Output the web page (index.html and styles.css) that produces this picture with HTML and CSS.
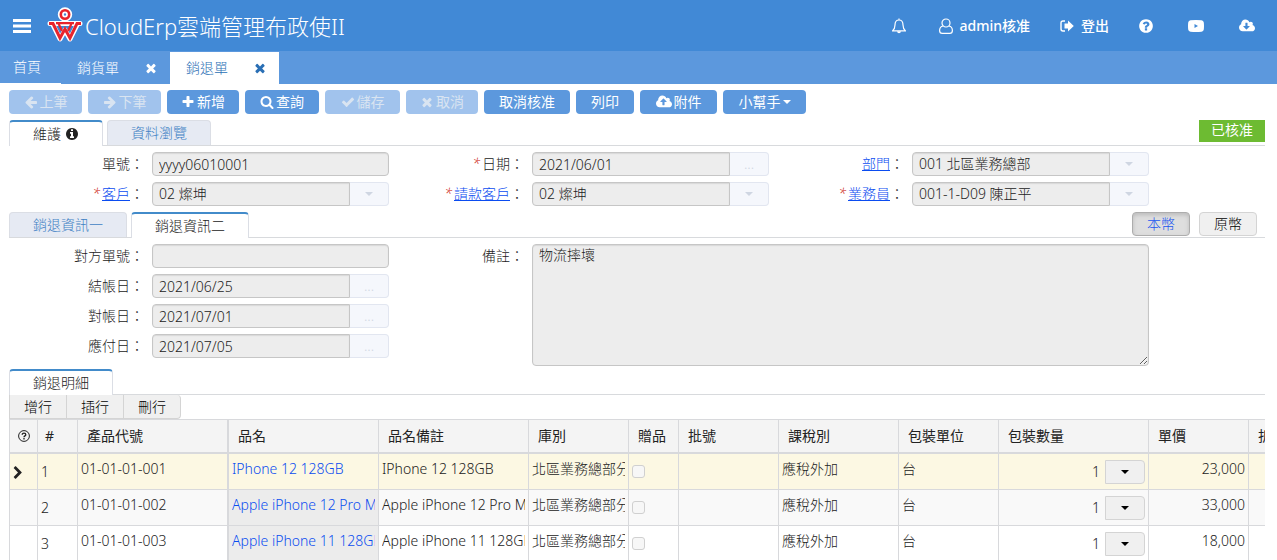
FILE: index.html
```html
<!DOCTYPE html>
<html lang="zh-Hant">
<head>
<meta charset="utf-8">
<meta name="viewport" content="width=device-width, initial-scale=1">
<title>CloudErp雲端管理布政使II</title>
<link rel="stylesheet" href="styles.css">
</head>
<body>
<svg class="sprite" aria-hidden="true">
  <symbol id="i-times" viewBox="0 0 1792 1792"><path d="M1490 1322q0 40-28 68l-136 136q-28 28-68 28t-68-28l-294-294-294 294q-28 28-68 28t-68-28l-136-136q-28-28-28-68t28-68l294-294-294-294q-28-28-28-68t28-68l136-136q28-28 68-28t68 28l294 294 294-294q28-28 68-28t68 28l136 136q28 28 28 68t-28 68l-294 294 294 294q28 28 28 68z"/></symbol>
  <symbol id="i-plus" viewBox="0 0 1792 1792"><path d="M1600 736v192q0 40-28 68t-68 28h-416v416q0 40-28 68t-68 28h-192q-40 0-68-28t-28-68v-416h-416q-40 0-68-28t-28-68v-192q0-40 28-68t68-28h416v-416q0-40 28-68t68-28h192q40 0 68 28t28 68v416h416q40 0 68 28t28 68z"/></symbol>
  <symbol id="i-search" viewBox="0 0 1792 1792"><path d="M1216 832q0-185-131.5-316.5t-316.5-131.5-316.5 131.5-131.5 316.5 131.5 316.5 316.5 131.5 316.5-131.5 131.5-316.5zm512 832q0 52-38 90t-90 38q-54 0-90-38l-343-342q-179 124-399 124-143 0-273.5-55.5t-225-150-150-225-55.5-273.5 55.5-273.5 150-225 225-150 273.5-55.5 273.5 55.5 225 150 150 225 55.5 273.5q0 220-124 399l343 343q37 37 37 90z"/></symbol>
  <symbol id="i-check" viewBox="0 0 1792 1792"><path d="M1671 566q0 40-28 68l-724 724-136 136q-28 28-68 28t-68-28l-136-136-362-362q-28-28-28-68t28-68l136-136q28-28 68-28t68 28l294 295 656-657q28-28 68-28t68 28l136 136q28 28 28 68z"/></symbol>
  <symbol id="i-left" viewBox="0 0 1792 1792"><path d="M1664 896v128q0 53-32.5 90.5t-84.5 37.5h-704l293 294q38 36 38 90t-38 90l-75 76q-37 37-90 37-52 0-91-37l-651-652q-37-37-37-90 0-52 37-91l651-650q38-38 91-38 52 0 90 38l75 74q38 38 38 91t-38 91l-293 293h704q52 0 84.5 37.5t32.5 90.5z"/></symbol>
  <symbol id="i-right" viewBox="0 0 1792 1792"><path transform="matrix(-1 0 0 1 1792 0)" d="M1664 896v128q0 53-32.5 90.5t-84.5 37.5h-704l293 294q38 36 38 90t-38 90l-75 76q-37 37-90 37-52 0-91-37l-651-652q-37-37-37-90 0-52 37-91l651-650q38-38 91-38 52 0 90 38l75 74q38 38 38 91t-38 91l-293 293h704q52 0 84.5 37.5t32.5 90.5z"/></symbol>
  <symbol id="i-info" viewBox="0 0 1792 1792"><path d="M1152 1376v-160q0-14-9-23t-23-9h-96v-512q0-14-9-23t-23-9h-320q-14 0-23 9t-9 23v160q0 14 9 23t23 9h96v320h-96q-14 0-23 9t-9 23v160q0 14 9 23t23 9h448q14 0 23-9t9-23zm-128-896v-160q0-14-9-23t-23-9h-192q-14 0-23 9t-9 23v160q0 14 9 23t23 9h192q14 0 23-9t9-23zm640 416q0 209-103 385.5t-279.5 279.5-385.5 103-385.5-103-279.5-279.5-103-385.5 103-385.5 279.5-279.5 385.5-103 385.5 103 279.5 279.5 103 385.5z"/></symbol>
  <symbol id="i-help" viewBox="0 0 1792 1792"><path d="M1024 1376v-192q0-14-9-23t-23-9h-192q-14 0-23 9t-9 23v192q0 14 9 23t23 9h192q14 0 23-9t9-23zm256-672q0-88-55.5-163t-138.5-116-170-41q-243 0-371 213-15 24 8 42l132 100q7 6 19 6 16 0 25-12 53-68 86-92 34-24 86-24 48 0 85.5 26t37.5 59q0 38-20 61t-68 45q-63 28-115.5 86.5t-52.5 125.5v36q0 14 9 23t23 9h192q14 0 23-9t9-23q0-19 21.5-49.5t54.5-49.5q32-18 49-28.5t46-35 44.5-48 28-60.5 12.5-81zm384 192q0 209-103 385.5t-279.5 279.5-385.5 103-385.5-103-279.5-279.5-103-385.5 103-385.5 279.5-279.5 385.5-103 385.5 103 279.5 279.5 103 385.5z"/></symbol>
  <symbol id="i-chevron" viewBox="0 0 1792 1792"><path d="M1363 877l-742 742q-19 19-45 19t-45-19l-166-166q-19-19-19-45t19-45l531-531-531-531q-19-19-19-45t19-45l166-166q19-19 45-19t45 19l742 742q19 19 19 45t-19 45z"/></symbol>
  <symbol id="i-upload" viewBox="0 0 1920 1792"><path d="M1280 864q0-14-9-23l-352-352q-9-9-23-9t-23 9l-351 351q-10 12-10 24 0 14 9 23t23 9h224v352q0 13 9.5 22.5t22.5 9.5h192q13 0 22.5-9.5t9.5-22.5v-352h224q13 0 22.5-9.5t9.5-22.5zm640 288q0 159-112.5 271.5t-271.5 112.5h-1088q-185 0-316.5-131.5t-131.5-316.5q0-130 70-240t188-165q-2-30-2-43 0-212 150-362t362-150q156 0 285.5 87t188.5 231q71-62 166-62 106 0 181 75t75 181q0 76-41 138 130 31 213.5 135.5t83.5 238.5z"/></symbol>
  <symbol id="i-download" viewBox="0 0 1920 1792"><path d="M1280 928q0-14-9-23t-23-9h-224v-352q0-13-9.500-22.500t-22.500-9.500h-192q-13 0-22.500 9.500t-9.500 22.500v352h-224q-13 0-22.500 9.500t-9.500 22.500q0 14 9 23l352 352q9 9 23 9t23-9l351-351q10-12 10-24zm640 224q0 159-112.500 271.500t-271.500 112.500h-1088q-185 0-316.500-131.500t-131.500-316.500q0-130 70-240t188-165q-2-30-2-43 0-212 150-362t362-150q156 0 285.500 87t188.500 231q71-62 166-62 106 0 181 75t75 181q0 76-41 138 130 31 213.500 135.500t83.500 238.500z"/></symbol>
  <symbol id="i-caret" viewBox="0 0 8 4"><path d="M0 0h8L4 4z"/></symbol>
</svg>

<header class="topbar">
  <button class="menu-btn" type="button" aria-label="選單">
    <svg width="18" height="14" viewBox="0 0 18 14"><path fill="currentColor" d="M0 0h18v3H0zM0 5.500h18v3H0zM0 11h18v3H0z"/></svg>
  </button>
  <svg class="logo" width="42" height="44" viewBox="0 0 42 44" aria-hidden="true">
    <g fill="none" stroke="#fff" stroke-linejoin="round" stroke-linecap="round">
      <circle cx="22" cy="12.500" r="4.200" stroke-width="6"/>
      <path stroke-width="5" d="M7 21.500h30M9.500 22l7.500 15 5-9 5 9 7.500-15"/>
    </g>
    <g fill="none" stroke="#e8242c">
      <circle cx="22" cy="12.500" r="4.200" stroke-width="2.600"/>
      <path stroke-width="3" d="M6 21.500h4l7 14.500 5-9 5 9 7-14.500h4"/>
      <path stroke-width="2.200" d="M13 21.100h18M15.500 21.500l3.500 7.500M28.500 21.500l-3.500 7.500"/>
    </g>
  </svg>
  <h1 class="brand">CloudErp雲端管理布政使II</h1>
  <nav class="topnav">
    <a class="bell" href="#" aria-label="通知"><svg width="14" height="16" viewBox="0 0 14 16"><path fill="none" stroke="currentColor" stroke-width="1.200" d="M7 .5v1.500M3 7c0-3 1.500-5 4-5s4 2 4 5c0 3 .8 4.500 2.500 5.900H.5C2.200 11.500 3 10 3 7z"/><path fill="currentColor" d="M5 13.300h4q-.3 2-2 2t-2-2z"/></svg></a>
    <a class="user" href="#"><svg width="14" height="16" viewBox="0 0 14 16"><g fill="none" stroke="currentColor" stroke-width="1.200"><circle cx="7" cy="5" r="4"/><path d="M4 8C1.500 8.500.6 10.500.6 12.500c0 1.800 1 2.900 2.600 2.900h7.600c1.600 0 2.600-1.100 2.600-2.900 0-2-.9-4-3.400-4.500"/></g></svg>admin核准</a>
    <a class="logout" href="#"><svg width="14" height="12" viewBox="0 0 14 12"><path fill="none" stroke="currentColor" stroke-width="1.400" d="M5 1H3Q1 1 1 3v6q0 2 2 2h2"/><path fill="currentColor" d="M4.500 3.500H8V.6L13.800 6 8 11.400V8.500H4.500z"/></svg>登出</a>
    <a class="help" href="#" aria-label="說明"><svg class="ico16"><use href="#i-help"/></svg></a>
    <a class="video" href="#" aria-label="影片"><svg width="16" height="12" viewBox="0 0 16 12"><path fill="currentColor" fill-rule="evenodd" d="M2.500.3Q8-.3 13.500.3 15.500.5 15.800 2.500q.4 3.500 0 7-.3 2-2.300 2.200-5.500.6-11 0-2-.2-2.300-2.200-.4-3.500 0-7Q.5.500 2.500.3zM6.500 4v4L10 6z"/></svg></a>
    <a class="cloud" href="#" aria-label="下載"><svg class="ico16"><use href="#i-download"/></svg></a>
  </nav>
</header>

<nav class="pages">
  <a class="page home" href="#">首頁</a>
  <div class="page"><a href="#">銷貨單</a><button type="button" aria-label="關閉銷貨單"><svg class="ico14"><use href="#i-times"/></svg></button></div>
  <div class="page current"><a href="#">銷退單</a><button type="button" aria-label="關閉銷退單"><svg class="ico14"><use href="#i-times"/></svg></button></div>
</nav>

<main>
  <div class="toolbar">
    <button class="btn w73" type="button" disabled><svg class="ico14"><use href="#i-left"/></svg>上筆</button>
    <button class="btn w73" type="button" disabled><svg class="ico14"><use href="#i-right"/></svg>下筆</button>
    <button class="btn w72" type="button"><svg class="ico14"><use href="#i-plus"/></svg>新增</button>
    <button class="btn w74" type="button"><svg class="ico14"><use href="#i-search"/></svg>查詢</button>
    <button class="btn w75" type="button" disabled><svg class="ico14"><use href="#i-check"/></svg>儲存</button>
    <button class="btn w72" type="button" disabled><svg class="ico14"><use href="#i-times"/></svg>取消</button>
    <button class="btn" type="button">取消核准</button>
    <button class="btn" type="button">列印</button>
    <button class="btn w77" type="button"><svg class="ico16"><use href="#i-upload"/></svg>附件</button>
    <button class="btn w83" type="button">小幫手<svg class="caret"><use href="#i-caret"/></svg></button>
  </div>

  <div class="tabs">
    <a class="tab active" href="#">維護 <svg class="ico14"><use href="#i-info"/></svg></a>
    <a class="tab" href="#">資料瀏覽</a>
    <span class="status">已核准</span>
  </div>

  <form class="fields">
    <div class="field"><label for="no">單號：</label><input id="no" value="yyyy06010001" readonly></div>
    <div class="field"><label for="date"><i>*</i>日期：</label><div class="group"><input id="date" value="2021/06/01" readonly><button type="button" disabled>...</button></div></div>
    <div class="field"><label for="dept"><a href="#">部門</a>：</label><div class="group"><select id="dept" disabled><option>001 北區業務總部</option></select><span class="addon"><svg class="caret"><use href="#i-caret"/></svg></span></div></div>
    <div class="field"><label for="cust"><i>*</i><a href="#">客戶</a>：</label><div class="group"><select id="cust" disabled><option>02 燦坤</option></select><span class="addon"><svg class="caret"><use href="#i-caret"/></svg></span></div></div>
    <div class="field"><label for="bill"><i>*</i><a href="#">請款客戶</a>：</label><div class="group"><select id="bill" disabled><option>02 燦坤</option></select><span class="addon"><svg class="caret"><use href="#i-caret"/></svg></span></div></div>
    <div class="field"><label for="sales"><i>*</i><a href="#">業務員</a>：</label><div class="group"><select id="sales" disabled><option>001-1-D09 陳正平</option></select><span class="addon"><svg class="caret"><use href="#i-caret"/></svg></span></div></div>
  </form>

  <div class="tabs second">
    <a class="tab" href="#">銷退資訊一</a>
    <a class="tab active" href="#">銷退資訊二</a>
    <div class="currency">
      <button class="pressed" type="button" aria-pressed="true">本幣</button>
      <button type="button">原幣</button>
    </div>
  </div>

  <form class="fields">
    <div class="field"><label for="ref">對方單號：</label><input id="ref" value="" readonly></div>
    <div class="field memo"><label for="memo">備註：</label><textarea id="memo" readonly>物流摔壞</textarea></div>
    <div class="field"><label for="d1">結帳日：</label><div class="group"><input id="d1" value="2021/06/25" readonly><button type="button" disabled>...</button></div></div>
    <div class="field"><label for="d2">對帳日：</label><div class="group"><input id="d2" value="2021/07/01" readonly><button type="button" disabled>...</button></div></div>
    <div class="field"><label for="d3">應付日：</label><div class="group"><input id="d3" value="2021/07/05" readonly><button type="button" disabled>...</button></div></div>
  </form>

  <div class="tabs detail"><a class="tab active" href="#">銷退明細</a></div>
  <div class="rowtools"><button type="button">增行</button><button type="button">插行</button><button type="button">刪行</button></div>

  <div class="grid-wrap">
    <table class="grid">
      <colgroup><col class="c28"><col class="c40"><col class="c150"><col class="c151"><col class="c150"><col class="c100"><col class="c50"><col class="c100"><col class="c120"><col class="c100"><col class="c150"><col class="c100"><col class="c100"></colgroup>
      <thead>
        <tr><th class="q"><svg width="12" height="12" viewBox="0 0 12 12"><circle cx="6" cy="6" r="5.400" fill="none" stroke="currentColor"/><path d="M4.200 4.700c0-2.200 3.600-2.200 3.600 0C7.800 6 6 5.800 6 7.200M6 8v1.400" fill="none" stroke="currentColor" stroke-width="1.300"/></svg></th><th class="n">#</th><th>產品代號</th><th class="edge">品名</th><th>品名備註</th><th>庫別</th><th>贈品</th><th>批號</th><th>課稅別</th><th>包裝單位</th><th>包裝數量</th><th>單價</th><th>折數</th></tr>
      </thead>
      <tbody>
        <tr class="selected"><td class="mark"><svg class="ico14"><use href="#i-chevron"/></svg></td><td class="low">1</td><td>01-01-01-001</td><td class="edge name"><div class="clip">IPhone 12 128GB</div></td><td><div class="clip">IPhone 12 128GB</div></td><td><div class="clip">北區業務總部分倉</div></td><td class="gift"><input type="checkbox" aria-label="贈品" disabled></td><td></td><td>應稅外加</td><td>台</td><td class="qty"><div>1<button type="button" aria-label="選擇數量"><svg class="caret"><use href="#i-caret"/></svg></button></div></td><td class="num">23,000</td><td></td></tr>
        <tr><td></td><td class="low">2</td><td>01-01-01-002</td><td class="edge name"><div class="clip">Apple iPhone 12 Pro Max</div></td><td><div class="clip">Apple iPhone 12 Pro Max</div></td><td><div class="clip">北區業務總部分倉</div></td><td class="gift"><input type="checkbox" aria-label="贈品" disabled></td><td></td><td>應稅外加</td><td>台</td><td class="qty"><div>1<button type="button" aria-label="選擇數量"><svg class="caret"><use href="#i-caret"/></svg></button></div></td><td class="num">33,000</td><td></td></tr>
        <tr><td></td><td class="low">3</td><td>01-01-01-003</td><td class="edge name"><div class="clip">Apple iPhone 11 128GB</div></td><td><div class="clip">Apple iPhone 11 128GB</div></td><td><div class="clip">北區業務總部分倉</div></td><td class="gift"><input type="checkbox" aria-label="贈品" disabled></td><td></td><td>應稅外加</td><td>台</td><td class="qty"><div>1<button type="button" aria-label="選擇數量"><svg class="caret"><use href="#i-caret"/></svg></button></div></td><td class="num">18,000</td><td></td></tr>
      </tbody>
    </table>
  </div>
</main>
</body>
</html>
```
FILE: styles.css
```css
* { box-sizing: border-box; }

body {
  margin: 0;
  height: 100vh;
  overflow: hidden;
  background: #fff;
  color: #222;
  font: 300 14px/20px "Noto Sans", "Noto Sans CJK TC", sans-serif;
}

button, input, select, textarea {
  font: inherit;
  color: inherit;
  margin: 0;
}

a { color: inherit; text-decoration: none; }
svg { flex: none; }
.sprite { position: absolute; width: 0; height: 0; }
.ico14 { width: 14px; height: 14px; fill: currentColor; }
.ico16 { width: 16px; height: 16px; fill: currentColor; }
.caret { width: 8px; height: 4px; fill: currentColor; }

/* Top bar */
.topbar {
  display: flex;
  align-items: center;
  height: 51px;
  padding: 0 22px 0 13px;
  background: #4189d6;
  color: #fff;
}

.menu-btn {
  display: flex;
  padding: 0;
  border: 0;
  background: none;
}

.logo { margin-left: 12px; margin-bottom: 3px; }

.brand {
  margin: 0;
  font-size: 22px;
  line-height: 32px;
  font-weight: 300;
  white-space: nowrap;
}

.topnav {
  display: flex;
  align-items: center;
  margin-left: auto;
  font-weight: 500;
}

.topnav a { display: flex; align-items: center; }
.bell { margin-right: 33px; }
.user { gap: 6px; margin-right: 30px; }
.logout { gap: 7px; margin-right: 29px; }
.help { margin-right: 34px; }
.video { margin-right: 35px; }

/* Open pages */
.pages {
  display: flex;
  height: 33px;
  background: #5c98dd;
  color: #fff;
}

.page {
  display: flex;
  align-items: center;
  width: 109px;
  padding: 0 12px 0 16px;
}

.page.home {
  width: 61px;
  padding: 0 13px;
  border-bottom: 1px solid #fff;
}

.page button {
  display: flex;
  margin-left: auto;
  padding: 0;
  border: 0;
  background: none;
}

.page.current {
  margin-top: 1px;
  background: #fff;
  color: #2a6fb5;
}

main { padding: 6px 12px 0 9px; }

/* Toolbar */
.toolbar { display: flex; gap: 6px; }

.btn {
  display: flex;
  align-items: center;
  justify-content: center;
  gap: 2px;
  height: 24px;
  padding: 0 15px;
  border: 0;
  border-radius: 4px;
  background: #5c98dd;
  color: #fff;
  font-weight: 400;
  white-space: nowrap;
}

.btn:disabled { background: #a1c3ed; color: #d9e4f1; }
.w72 { width: 72px; padding: 0; }
.w73 { width: 73px; padding: 0; }
.w74 { width: 74px; padding: 0; }
.w75 { width: 75px; padding: 0; }
.w77 { width: 77px; padding: 0; }
.w83 { width: 83px; padding: 0; }

/* Tabs */
.tabs {
  display: flex;
  gap: 4px;
  height: 26px;
  margin-top: 6px;
  border-bottom: 1px solid #d8dadd;
}

.tab {
  display: flex;
  align-items: center;
  gap: 4px;
  height: 25px;
  padding: 0 23px;
  border: 1px solid #dbdee5;
  border-bottom: 0;
  border-radius: 4px 4px 0 0;
  background: #e6eaf3;
  color: #4080c4;
  white-space: nowrap;
}

.tab.active {
  height: 26px;
  border-top: 2px solid #428bca;
  background: #fff;
  color: #222;
}

.status {
  height: 22px;
  margin-left: auto;
  padding: 0 12px;
  background: #6dbb32;
  color: #fff;
  font-weight: 400;
}

.second { margin-top: 6px; }
.detail { margin-top: 3px; }

.currency {
  display: flex;
  gap: 9px;
  margin: 0 8px 0 auto;
}

.currency button,
.rowtools button {
  width: 58px;
  height: 24px;
  padding: 0;
  border: 1px solid #d4d4d4;
  border-radius: 4px;
  background: #f0f0f0;
  color: #000;
}

.currency .pressed {
  border-color: #adadad;
  background: #dedede;
  box-shadow: inset 0 2px 4px #bbb;
  color: #1a56f0;
}

/* Fields */
.fields {
  display: grid;
  grid-template-columns: repeat(3, 1fr);
  gap: 6px 0;
  margin-top: 6px;
  padding-right: 116px;
}

.field { display: flex; min-width: 0; }

.field label {
  flex: none;
  width: 143px;
  padding-right: 8px;
  line-height: 24px;
  text-align: right;
  white-space: nowrap;
}

.field label i { margin-right: 2px; color: #d0342c; }
.field label a { color: #0b4cf0; text-decoration: underline; }

.field > input,
.group { flex: 1; min-width: 0; }
.group { display: flex; }

.field input,
.field select,
.field textarea {
  padding: 0 6px;
  border: 1px solid #c6c6c6;
  border-radius: 4px;
  background: #ededed;
  color: #222;
  opacity: 1;
  box-shadow: inset 0 1px 1px #d8d8d8;
}

.field input,
.field select { height: 24px; }

.group input,
.group select {
  flex: 1;
  min-width: 0;
  border-radius: 4px 0 0 4px;
  appearance: none;
}

.group button,
.addon {
  display: flex;
  align-items: center;
  justify-content: center;
  width: 39px;
  height: 24px;
  padding: 0;
  border: 1px solid #e2e6f0;
  border-left: 0;
  border-radius: 0 4px 4px 0;
  background: #f5f7fc;
  color: #cfd6e2;
}

.memo { grid-column: 2 / 4; grid-row: 1 / 5; }

.memo textarea {
  flex: 1;
  height: 122px;
  margin-bottom: -8px;
  resize: both;
}

.fields + .detail { margin-top: 11px; }

/* Detail rows */
.rowtools { display: flex; }
.rowtools button { height: 24px; border-radius: 0; border-top: 0; border-left: 0; width: 57px; }
.rowtools button:first-child { border-left: 1px solid #d4d4d4; width: 58px; }
.rowtools button:last-child { border-radius: 0 4px 4px 0; }

.grid-wrap { overflow: hidden; }

.grid {
  width: 1340px;
  table-layout: fixed;
  border-collapse: separate;
  border-spacing: 0;
  border-top: 1px solid #d8d9dc;
  border-left: 1px solid #d8d9dc;
}

.c28 { width: 28px; }
.c40 { width: 40px; }
.c50 { width: 50px; }
.c100 { width: 100px; }
.c120 { width: 120px; }
.c150 { width: 150px; }
.c151 { width: 151px; }

.grid th,
.grid td {
  overflow: hidden;
  border-right: 1px solid #d8d9dc;
  border-bottom: 1px solid #d8d9dc;
  text-align: left;
  white-space: nowrap;
}

.grid th {
  height: 34px;
  padding: 0 9px;
  border-bottom-width: 2px;
  background: #f4f4f4;
  font-weight: 400;
}

.grid .q { padding: 2px 0 0; text-align: center; }
.grid th.n { padding-left: 7px; }

.grid td {
  height: 36px;
  padding: 5px 3px 10px;
  background: #fff;
}

.clip { overflow: hidden; }

.grid tr:nth-child(2) td { background: #f9f9f9; }
.grid .edge { border-left: 1px solid #d8d9dc; }
.grid td.name, .grid tr:nth-child(2) td.name { background: #ececec; color: #0b4cf0; }
.grid tr.selected td, .grid tr.selected td.name { background: #fcf8e3; }
.grid td.low { padding: 8px 3px 7px; }
.grid td.mark { padding: 6px 0 0 1px; }
.grid td.gift { padding: 0 3px; }
.grid td.num { text-align: right; }
.grid td.qty { padding: 4px 3px 3px; }

.gift input {
  display: block;
  width: 13px;
  height: 13px;
  margin: 0;
  border: 1px solid #d0d0d0;
  border-radius: 3px;
  background: #f7f7f7;
  appearance: none;
}

.qty div {
  display: flex;
  align-items: center;
  justify-content: flex-end;
  gap: 5px;
}

.qty button {
  display: flex;
  align-items: center;
  justify-content: center;
  width: 40px;
  height: 24px;
  padding: 0;
  border: 1px solid #d4d4d4;
  border-radius: 0 4px 4px 0;
  background: #f0f0f0;
  color: #000;
}
```
